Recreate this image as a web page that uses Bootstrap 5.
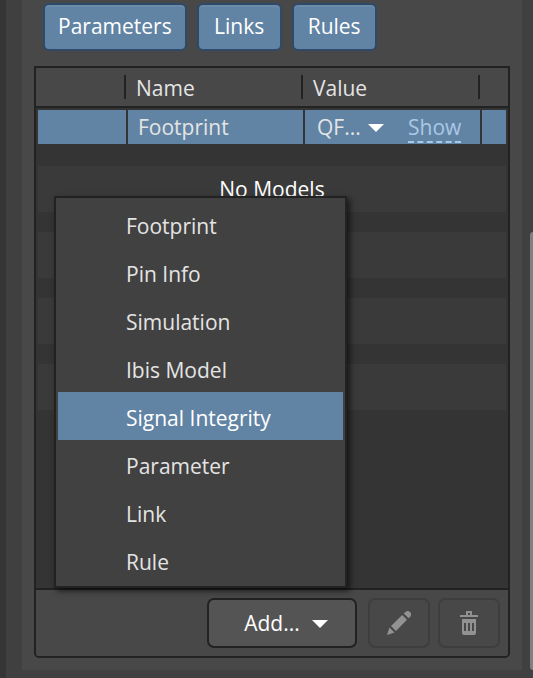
<!DOCTYPE html>
<html lang="en">
<head>
<meta charset="utf-8">
<meta name="viewport" content="width=device-width, initial-scale=1">
<title>Component models</title>
<link href="https://cdn.jsdelivr.net/npm/bootstrap@5.3.0/dist/css/bootstrap.min.css" rel="stylesheet">
<style>
  :root { --line: #222; --panel: #484848; --well: #343434; --blue: #6284a4; --ink: #e4e4e4; }
  body { font-family: "Open Sans", "Noto Sans", sans-serif; font-size: 21px; line-height: 28px; color: var(--ink); background: #404040; }
  .shell { border-left: 6px solid #353535; padding: 0 0 8px 16px; }
  .side-panel { background: var(--panel); padding: 3px 12px 12px; }
  .scroller { flex: none; width: 11px; padding: 232px 0 8px 8px; }
  .scroll-thumb { background: #808080; border-radius: 4px 0 0 4px; }
  .filters { gap: 10px; padding: 0 9px 15px; }
  .filters .btn { min-width: 85px; font-size: inherit; line-height: 28px; color: #fff; background: var(--blue); border: 2px solid #2e4a68; border-radius: 6px; padding: 7px 13px 9px; box-shadow: inset 0 2px #6b8ba9; }
  .models { border: 2px solid var(--line); border-radius: 0 0 5px 5px; }
  .grid { width: 100%; table-layout: fixed; border-collapse: separate; border-spacing: 2px 0; background: linear-gradient(var(--panel) 38px, var(--line) 38px 40px, var(--well) 40px); }
  .grid th { height: 42px; padding: 0 0 2px 8px; font-weight: 400; position: relative; }
  .grid th:not(:last-child)::after { content: ""; position: absolute; right: 0; top: 7px; width: 2px; height: 24px; background: var(--line); }
  .grid td { height: 34px; padding: 0 0 0 10px; background: var(--blue); line-height: 34px; }
  .grid td.value-cell { padding-left: 12px; }
  .grid .c-mark { width: 88px; } .grid .c-end { width: 24px; }
  .value-pick { width: 68px; }
  .value-pick select { appearance: none; border: 0; background: none; color: inherit; width: 100%; padding: 0; height: 34px; line-height: 34px; }
  .value-pick svg { position: absolute; right: 1px; top: 14px; pointer-events: none; }
  .show-link { color: #a9c8e6; text-decoration: none; line-height: 34px; height: 33px; border-bottom: 2px dashed #a9c8e6; margin-left: 23px; }
  .well { background: var(--well); padding: 22px 2px; gap: 20px; }
  .band { height: 46px; background: #3a3a3a; color: #fff; }
  .actions { border-top: 2px solid var(--line); background: var(--panel); padding: 8px; border-radius: 0 0 3px 3px; }
  .actions .btn { height: 50px; border: 2px solid #3e3e3e; border-radius: 7px; font-size: inherit; color: #929292; background: none; opacity: 1; }
  .actions .icon-btn { width: 62px; padding: 0; margin-left: 8px; }
  .actions .add-btn { width: 150px; padding: 2px 8px 0 16px; color: #fff; background: #545454; border-color: var(--line); gap: 12px; margin-right: 3px; }
  .add-menu { position: absolute; left: 18px; bottom: calc(100% + 2px); width: 293px; background: #414141; border: 2px solid var(--line); padding: 2px; box-shadow: 3px 3px 6px rgba(0,0,0,.6); }
  .add-menu button { display: block; width: 100%; height: 48px; border: 0; padding: 4px 0 0 68px; text-align: left; color: var(--ink); background: none; }
  .add-menu button.current { background: var(--blue); color: #fff; }
</style>
<script src="https://cdn.jsdelivr.net/npm/bootstrap@5.3.0/dist/js/bootstrap.bundle.min.js"></script>
</head>
<body>
<div class="d-flex min-vh-100">
  <main class="shell flex-grow-1 d-flex flex-column">
    <section class="side-panel flex-grow-1 d-flex flex-column">
      <div class="filters d-flex">
        <button type="button" class="btn">Parameters</button>
        <button type="button" class="btn">Links</button>
        <button type="button" class="btn">Rules</button>
      </div>
      <div class="models flex-grow-1 d-flex flex-column">
        <table class="grid">
          <colgroup><col class="c-mark"><col><col><col class="c-end"></colgroup>
          <thead><tr><th></th><th scope="col">Name</th><th scope="col">Value</th><th></th></tr></thead>
          <tbody><tr>
            <td></td><td>Footprint</td>
            <td class="value-cell"><div class="d-flex align-items-start">
              <div class="value-pick position-relative">
                <select aria-label="Footprint value"><option>QF...</option></select>
                <svg width="16" height="8" viewBox="0 0 16 8" aria-hidden="true"><path d="M0 0h16L8 8z" fill="#fff"/></svg>
              </div>
              <a class="show-link" href="#">Show</a>
            </div></td>
            <td></td>
          </tr></tbody>
        </table>
        <div class="well flex-grow-1 d-flex flex-column">
          <div class="band d-flex align-items-center justify-content-center">No Models</div>
          <div class="band"></div>
          <div class="band"></div>
          <div class="band"></div>
        </div>
        <div class="actions position-relative d-flex justify-content-end">
          <div class="add-menu" role="menu">
            <button type="button" role="menuitem">Footprint</button>
            <button type="button" role="menuitem">Pin Info</button>
            <button type="button" role="menuitem">Simulation</button>
            <button type="button" role="menuitem">Ibis Model</button>
            <button type="button" role="menuitem" class="current">Signal Integrity</button>
            <button type="button" role="menuitem">Parameter</button>
            <button type="button" role="menuitem">Link</button>
            <button type="button" role="menuitem">Rule</button>
          </div>
          <button type="button" class="btn add-btn d-flex align-items-center justify-content-center" aria-expanded="true">Add...
            <svg width="16" height="8" viewBox="0 0 16 8" aria-hidden="true"><path d="M0 0h16L8 8z" fill="#fff"/></svg>
          </button>
          <button type="button" class="btn icon-btn d-flex align-items-center justify-content-center" aria-label="Edit" disabled>
            <svg width="24" height="24" viewBox="0 0 24 24" fill="currentColor" aria-hidden="true"><path d="M0 24l2.500-7.500 5 5zM4 15L15.200 4l4.800 4.800L9 20zM16.800 2.500l1.500-1.500Q21-.8 23 1t.5 4.500L21.600 7.200z"/></svg>
          </button>
          <button type="button" class="btn icon-btn d-flex align-items-center justify-content-center" aria-label="Delete" disabled>
            <svg width="18" height="24" viewBox="0 0 18 24" fill="currentColor" aria-hidden="true"><path fill-rule="evenodd" d="M0 4h6V0h6v4h6v2H0zM8 2v2h2V2zM2 8h14v14q0 2-2 2H4q-2 0-2-2zM4 12v8h2v-8zM8 12v8h2v-8zM12 12v8h2v-8z"/></svg>
          </button>
        </div>
      </div>
    </section>
  </main>
  <div class="scroller d-flex flex-column"><div class="scroll-thumb flex-grow-1"></div></div>
</div>
</body>
</html>
